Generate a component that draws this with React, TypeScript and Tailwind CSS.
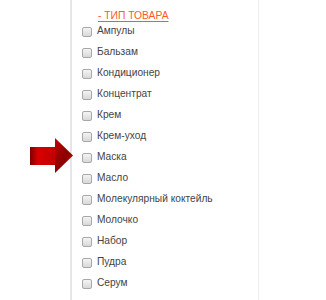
import React from "react";

const items = [
  "Ампулы",
  "Бальзам",
  "Кондиционер",
  "Концентрат",
  "Крем",
  "Крем-уход",
  "Маска",
  "Масло",
  "Молекулярный коктейль",
  "Молочко",
  "Набор",
  "Пудра",
  "Серум",
];

export default function App() {
  return (
    <div className="relative w-[326px] h-[300px] bg-white overflow-hidden" style={{ fontFamily: '"Liberation Sans", Arial, sans-serif' }}>
      <div className="absolute left-[30px] top-[138px]">
        <svg width="44" height="36" viewBox="0 0 44 36">
          <defs>
            <linearGradient id="ab" x1="0" y1="0" x2="1" y2="0">
              <stop offset="0" stopColor="#7a0000" />
              <stop offset="0.3" stopColor="#d80000" />
              <stop offset="1" stopColor="#c00000" />
            </linearGradient>
            <linearGradient id="ah" x1="0" y1="0" x2="1" y2="1">
              <stop offset="0" stopColor="#c00000" />
              <stop offset="0.55" stopColor="#8a0000" />
              <stop offset="1" stopColor="#d00000" />
            </linearGradient>
          </defs>
          <rect x="0" y="9" width="26" height="18" fill="url(#ab)" />
          <polygon points="25,0 43,17.5 25,35" fill="url(#ah)" />
        </svg>
      </div>
      <div className="ml-[70px] w-[189px] h-[300px] border-l-[2px] border-r border-l-[#e6e6e6] border-r-[#eeeeee]">
        <div className="pl-[26px] pt-[10px] h-[21px] flex items-start">
          <span className="block text-[10.3px] leading-[11px] font-medium text-[#ff5a1f] underline underline-offset-[2px]">- ТИП ТОВАРА</span>
        </div>
        <div className="flex flex-col pl-[10px]">
          {items.map((t) => (
            <div key={t} className="flex items-center h-[21px] gap-[5px]">
              <span className="w-[10px] h-[10px] rounded-[2px] border border-[#a8a8a8] bg-gradient-to-b from-[#f4f4f4] to-[#d8d8d8]" />
              <span className="text-[10.2px] text-[#444444] leading-none">{t}</span>
            </div>
          ))}
        </div>
      </div>
    </div>
  );
}
